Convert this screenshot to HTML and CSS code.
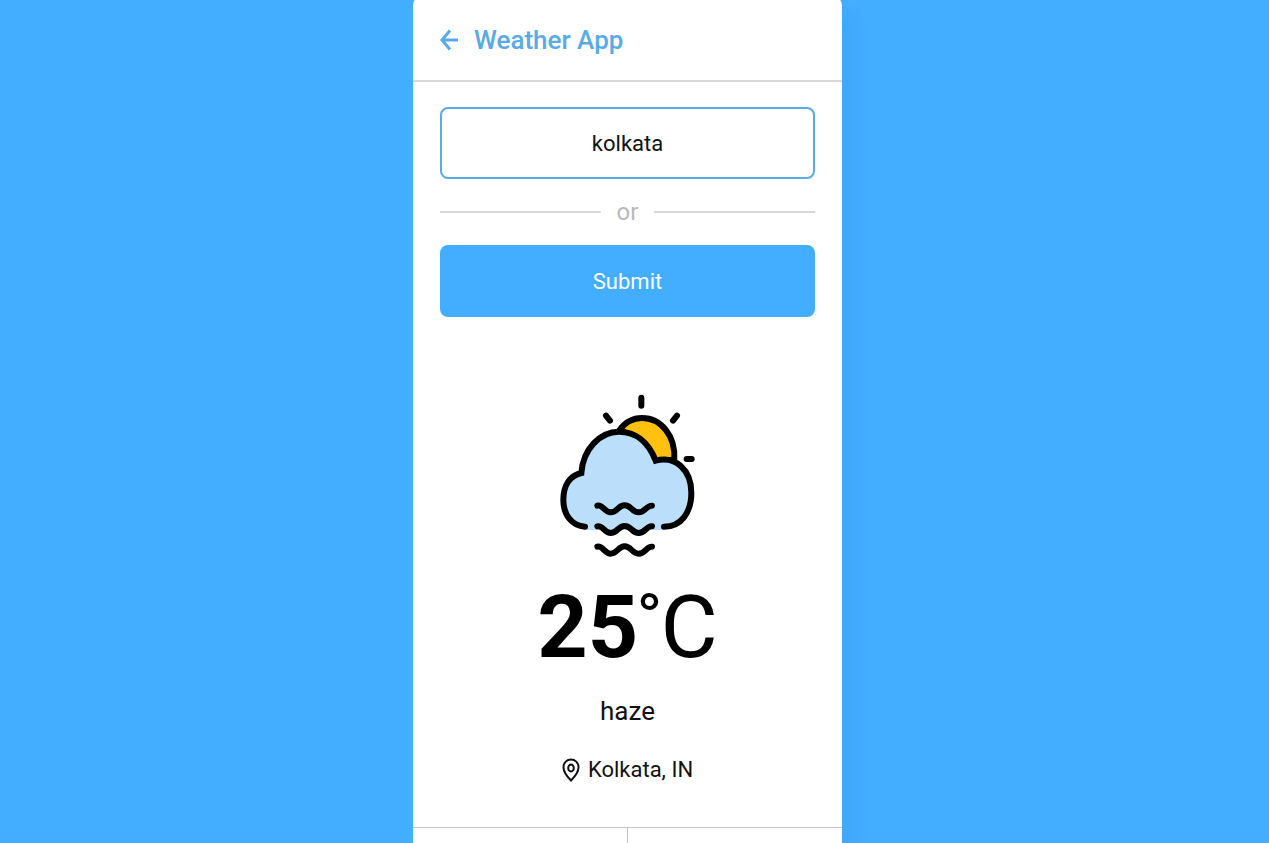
FILE: index.html
```html
<!DOCTYPE html>
<html lang="en">
<head>
  <meta charset="utf-8">
  <meta name="viewport" content="width=device-width, initial-scale=1">
  <title>Weather App</title>
  <link rel="stylesheet" href="styles.css">
</head>
<body>
  <main class="card">
    <header class="header">
      <a class="back" href="#" aria-label="Back">
        <svg width="18" height="22" viewBox="0 0 18 22" fill="none" stroke="currentColor" stroke-width="3"><path d="M18 11H2M10 1.500L2 11l8 9.500"/></svg>
      </a>
      <h1 class="title">Weather App</h1>
    </header>
    <form class="search">
      <input class="field" type="text" value="kolkata" aria-label="City name">
      <div class="divider">or</div>
      <button class="submit" type="button">Submit</button>
    </form>
    <section class="weather">
      <svg class="weather-icon" viewBox="0 0 465 540" fill="none" stroke="#000" stroke-width="18" stroke-linecap="round" stroke-linejoin="round" aria-hidden="true">
        <path d="M208 136C225 112 248 99 276 99C333 99 377 152 373 224L318 228Z" fill="#ffc10e"/>
        <path d="M105 426H345C394 426 424 382 424 323C424 256 377 211 317 227C295 170 256 140 207 140C150 140 99 192 94 264C60 272 40 301 40 345C40 390 66 422 105 426Z" fill="#bbdefb" stroke="none"/>
        <path d="M105 426h240v9H105z" fill="#bbdefb" stroke="none"/>
        <path stroke-linejoin="miter" d="M105 425C66 422 40 390 40 345C40 301 60 272 94 264C99 192 150 140 207 140C256 140 295 170 317 227C377 211 424 256 424 323C424 382 394 425 342 425"/>
        <path d="M274 38v24M168 92l12 15M381 92l-12 15M410 222h15"/>
        <path d="M142 362C158 358 164 382 182 382C202 382 204 361 224 361C244 361 246 382 266 382C286 382 290 360 306 362"/>
        <path d="M142 424C158 420 164 444 182 444C202 444 204 423 224 423C244 423 246 444 266 444C286 444 290 422 306 424"/>
        <path d="M142 485C158 481 164 506 182 506C202 506 204 484 224 484C244 484 246 506 266 506C286 506 290 483 306 485"/>
      </svg>
      <div class="temp"><span class="number">25</span><span class="degree">°</span><span class="unit">C</span></div>
      <p class="condition">haze</p>
      <p class="location">
        <svg width="18" height="24" viewBox="0 0 18 24" fill="none" stroke="currentColor" stroke-width="2" aria-hidden="true"><path d="M9 22.5C6 19.5 1.500 15 1.500 9.500C1.500 4.500 5 1.500 9 1.500S16.500 4.500 16.500 9.500C16.500 15 12 19.500 9 22.500Z"/><ellipse cx="9" cy="10" rx="2.800" ry="3.500"/></svg>
        <span>Kolkata, IN</span>
      </p>
    </section>
    <div class="details"><div class="detail"></div><div class="detail"></div></div>
  </main>
</body>
</html>
```
FILE: styles.css
```css
* {
  box-sizing: border-box;
  margin: 0;
}

body {
  display: flex;
  justify-content: center;
  min-height: 100vh;
  padding-right: 14px;
  background: #43adff;
  color: #111;
  font-family: Roboto, "Liberation Sans", sans-serif;
}

.card {
  display: flex;
  flex-direction: column;
  width: 100%;
  max-width: 429px;
  margin-top: -3px;
  background: #fff;
  border-radius: 8px 8px 0 0;
  box-shadow: 14px 14px 20px rgba(0, 0, 0, 0.03);
}

.header {
  display: flex;
  align-items: center;
  gap: 16px;
  padding: 23px 27px 20px;
  border-bottom: 2px solid #d8d8d8;
  color: #5aaae6;
}

.back {
  display: flex;
  color: inherit;
}

.title {
  font-size: 26px;
  font-weight: 500;
  line-height: 40px;
}

.search {
  padding: 25px 27px 0;
}

.field,
.submit {
  display: block;
  width: 100%;
  height: 72px;
  border-radius: 8px;
  font: inherit;
  font-size: 22px;
  text-align: center;
}

.field {
  border: 2px solid #5aaae6;
  background: #fff;
  color: #111;
  outline: none;
}

.divider {
  display: flex;
  align-items: center;
  gap: 16px;
  margin: 17px 0;
  color: #b8b8b8;
  font-size: 24px;
  line-height: 32px;
}

.divider::before,
.divider::after {
  content: "";
  flex: 1;
  height: 2px;
  background: #d8d8d8;
}

.submit {
  border: 0;
  background: #43adff;
  color: #fff;
}

.weather {
  display: flex;
  flex-direction: column;
  align-items: center;
  padding: 68px 27px 41px;
}

.weather-icon {
  width: 155px;
  height: 180px;
}

.temp {
  display: flex;
  margin-top: 12px;
  color: #000;
  font-size: 88px;
  line-height: 100px;
}

.number {
  font-weight: 700;
}

.degree {
  font-family: "Liberation Sans", sans-serif;
  font-size: 56px;
  font-weight: 700;
  line-height: 72px;
}

.unit {
  font-size: 88px;
}

.condition {
  margin-top: 16px;
  font-size: 26px;
  line-height: 36px;
}

.location {
  display: flex;
  align-items: center;
  gap: 8px;
  margin-top: 25px;
  font-size: 22px;
  line-height: 32px;
}

.details {
  display: flex;
  flex: 1;
  border-top: 1px solid #c4c4c4;
}

.detail {
  flex: 1;
}

.detail + .detail {
  border-left: 1px solid #c4c4c4;
}
```
